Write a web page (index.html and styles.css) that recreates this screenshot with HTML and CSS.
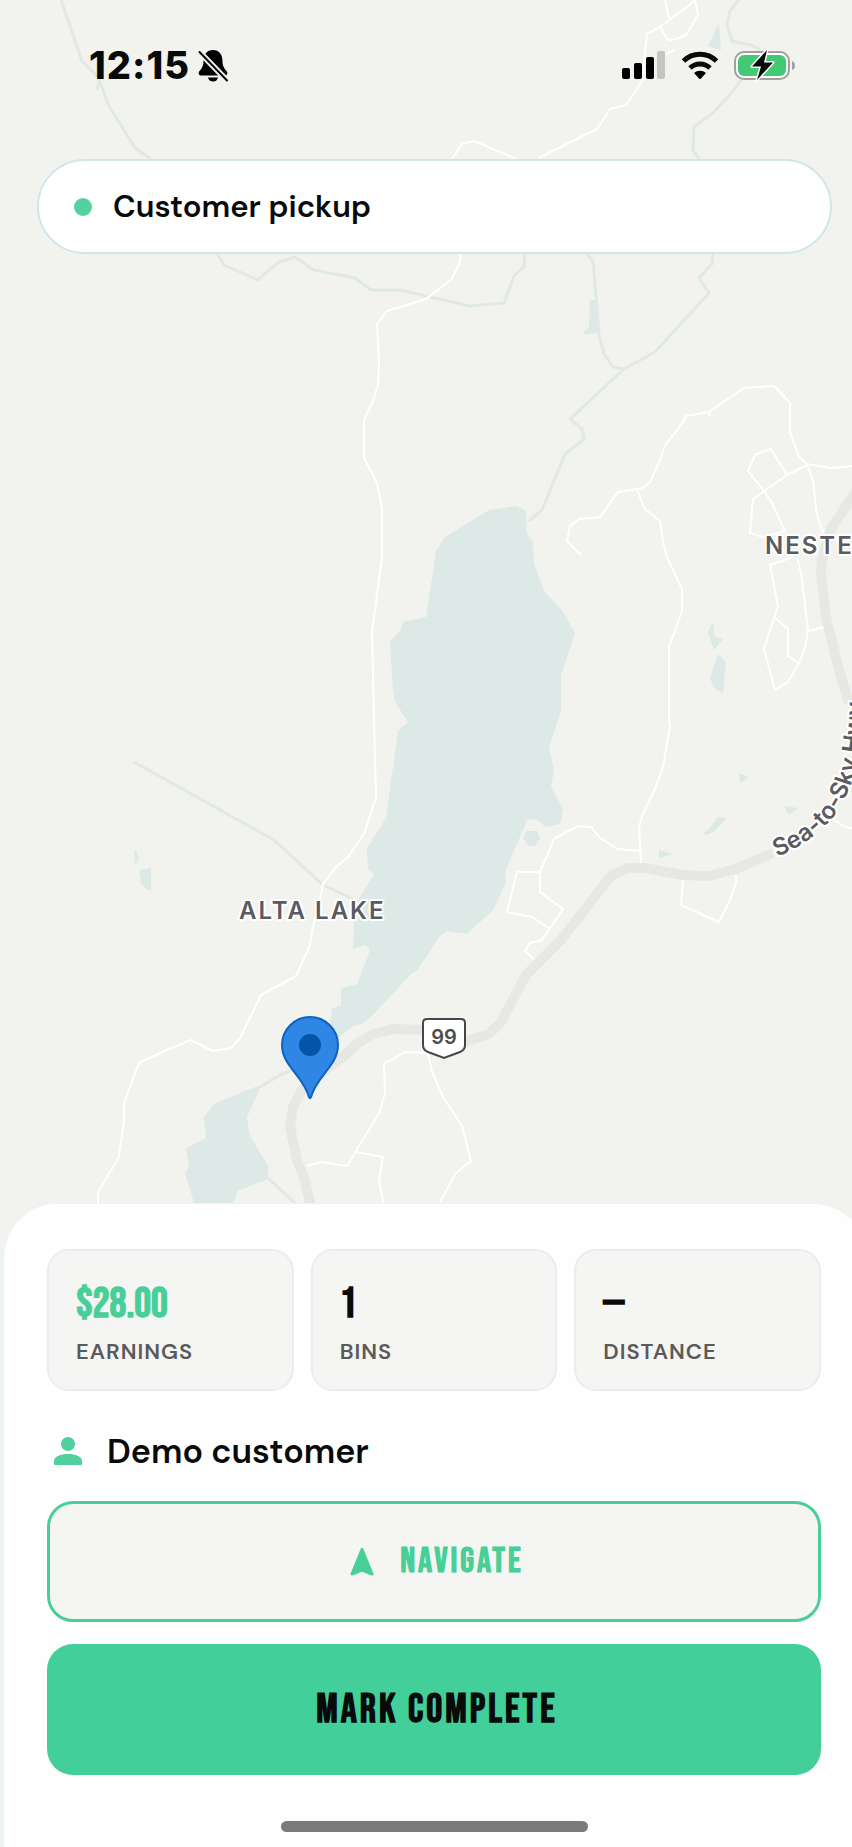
FILE: index.html
```
<!DOCTYPE html>
<html lang="en">
<head>
    <meta charset="UTF-8">
    <meta name="viewport" content="width=device-width, initial-scale=1.0">
    <title>Customer pickup</title>
    <link rel="stylesheet" href="styles.css">
</head>
<body>
    <div class="app">
        <main class="map-area">
            <svg class="map" viewBox="0 0 852 1264" preserveAspectRatio="xMidYMin slice" role="img" aria-label="Map of Alta Lake">
                <!-- Rivers -->
                <g class="river">
                    <path d="M61 0L82 61L98 77L109 106L135 148L151 159M99 82L97 90"/>
                    <path d="M217 253L224 265L258 280L277 263L295 257L314 270L355 278L371 290L400 290L426 296L470 306L504 303L514 276L524 267L525 253"/>
                    <path d="M739 0L730 11L727 25L732 41L751 45L759 49L741 80L734 90L713 113L694 127L693 150L699 159L713 253L712 264L699 278L709 293L655 352L624 369L570 419L582 429L584 439L565 454L542 510L529 521"/>
                    <path d="M586 253L593 261L597 307L599 335L604 354L613 367L624 369"/>
                    <path d="M134 762L274 840L323 885L353 899"/>
                    <path d="M260 1087L280 1075L293 1070M268 1178L298 1206"/>
                </g>
                <!-- Lakes and ponds -->
                <g class="water">
                    <path d="M489 510L516 506L526 511L527 533L533 542L534 563L538 576L545 592L563 612L575 633L561 675L561 711L549 747L554 770L551 786L563 809L560 824L546 827L536 819L527 820L524 828L506 869L505 885L493 910L467 934L447 931L439 937L426 957L417 971L412 973L373 1015L362 1024L353 1026L342 1035L327 1045L332 1008L341 1006L341 988L357 984L369 953L369 947L364 945L353 949L354 923L358 900L374 875L373 873L368 870L367 848L386 818L398 731L408 722L395 702L393 690L390 642L401 629L403 622L426 617L436 551L445 537Z"/>
                    <path d="M267 1083L260 1088L247 1117L249 1134L268 1166L268 1179L238 1191L232 1206H195L185 1173L189 1167L186 1148L206 1138L204 1117L214 1104L247 1090Z"/>
                    <path d="M590 300H595L599 332L585 335L583 332L589 327Z"/>
                    <path d="M719 23L721 50L708 46Z"/>
                    <path d="M134 851H136L139 858L136 864H135ZM139 870L151 868V890H148L141 884Z"/>
                    <path d="M713 622L715 637L723 639L714 650L708 632ZM718 654L726 662L723 693L714 688L710 678Z"/>
                    <path d="M738 773L749 777L741 783ZM784 806L798 808L789 815ZM718 817L727 818L715 831L709 834L702 835L709 829ZM659 850L673 854L659 858Z"/>
                    <path d="M526 831H537L540 838L535 846H529L523 838Z"/>
                </g>
                <!-- Local roads -->
                <g class="road">
                    <path d="M452 159L462 144L474 141L516 159"/>
                    <path d="M539 158L597 129L610 109L626 105L637 89L643 79L645 52L647 34L660 27L696 0M665 0L669 18M660 27L668 40L676 39L686 35L698 15L695 0M674 50L666 54"/>
                    <path d="M461 253L459 265L451 280L426 299L387 311L377 324L379 363L378 385L373 401L364 420V458L377 483L382 508V557L372 632L374 720L376 797L364 834L348 857L336 867L323 884L320 900L313 927L310 945L296 976L261 995L240 1038L231 1048L213 1051L191 1040L169 1049L139 1063L124 1103V1120L119 1157L98 1192V1206"/>
                    <path d="M581 555L567 541L570 526L579 519L600 517L618 492L637 489L644 487L650 482L660 460L665 445L682 424L686 416L709 412L744 388L774 386L790 403V432L799 457L807 464L831 468L852 466M709 412L710 416"/>
                    <path d="M637 489L644 508L660 521L663 541L667 557L682 589V611L669 647V720L670 726L663 767L655 789L642 816L639 828L641 863"/>
                    <path d="M807 465L787 475L771 449L755 455L748 471L764 491L772 503L785 531L763 537L750 533L753 499L787 475M807 465L813 480L816 509L819 523L824 533"/>
                    <path d="M793 557L770 565L778 606L764 649L775 690L788 682L799 663L805 648L808 630L801 573L797 557M774 617L788 629V656L799 664M809 631L824 627"/>
                    <path d="M640 851L617 849L599 837L591 827L578 826L554 839L540 872V892L563 909L542 940L530 943L525 951L534 959M540 872H517L507 912L532 917L549 928"/>
                    <path d="M683 880L681 905L719 922L729 902L736 883V875M834 820L845 827L852 828"/>
                    <path d="M438 1206L456 1173L471 1161L462 1126L443 1097L432 1072L428 1053L405 1052L384 1064L385 1093L379 1113L347 1166L322 1162L306 1166M356 1152L383 1157L379 1181L384 1206"/>
                </g>
                <!-- Highway 99 -->
                <g class="highway">
                    <path d="M312 1210L304 1178L297 1160L290 1127L293 1107L302 1090L328 1068L343 1057L358 1043L373 1034L393 1029L426 1030L460 1043L489 1034L501 1022L526 975L561 940L611 876L628 868H644L683 875L708 876L736 869L773 853"/>
                    <path d="M856 491L831 529L822 560L821 573L826 617L839 670L849 703"/>
                </g>
                <path id="hwy-path" class="label-path" d="M777 857C804 846 824 830 837 812C855 785 863 750 863 690V560"/>
                <text class="map-label"><textPath href="#hwy-path">Sea-to-Sky Hwy</textPath></text>
                <text class="map-label place" x="765" y="554">NESTERS</text>
                <text class="map-label place" x="239" y="919">ALTA LAKE</text>
                <g class="shield">
                    <path d="M427 1019H461Q465 1019 465 1023V1045Q465 1050 460 1052L444 1058L428 1052Q423 1050 423 1045V1023Q423 1019 427 1019Z"/>
                    <text x="444" y="1044" text-anchor="middle">99</text>
                </g>
                <g class="pin">
                    <path d="M310 1017A28 28 0 0 0 282 1045C282 1066 303 1075 309 1097Q310 1099 311 1097C317 1075 338 1066 338 1045A28 28 0 0 0 310 1017Z"/>
                    <circle cx="310" cy="1045" r="11"/>
                </g>
            </svg>

            <div class="status-bar">
                <div class="status-left">
                    <span class="time">12:15</span>
                    <svg class="bell" width="30" height="33" viewBox="0 0 30 33" aria-label="Silent">
                        <path d="M15 1C9 1 5.500 5.500 5.500 12C5.500 17 4 19 1.500 22C0 24 0.500 26.500 3 26.500H27C29.500 26.500 30 24 28.500 22C26 19 24.500 17 24.500 12C24.500 5.500 21 1 15 1Z"/>
                        <path d="M10 28.500H20C19 31.500 17.500 32.500 15 32.500S11 31.500 10 28.500Z"/>
                        <path class="slash-gap" d="M1.500 3L29 31.500"/>
                        <path class="slash" d="M1.500 3L29 31.500"/>
                    </svg>
                </div>
                <div class="status-right">
                    <svg width="44" height="30" viewBox="0 0 44 30" aria-label="Signal">
                        <rect x="0" y="18" width="8" height="11" rx="2"/>
                        <rect x="12" y="13" width="8" height="16" rx="2"/>
                        <rect x="24" y="7" width="8" height="22" rx="2"/>
                        <rect class="dim" x="35" y="1" width="8" height="28" rx="2"/>
                    </svg>
                    <svg width="38" height="30" viewBox="0 0 38 30" aria-label="Wi-Fi">
                        <path class="wave" d="M2.500 11A23.500 23.500 0 0 1 35.500 11"/>
                        <path class="wave" d="M9 18A14.500 14.500 0 0 1 29 18"/>
                        <path d="M13 23A9 9 0 0 1 25 23L20 28.500Q19 29.500 18 28.500Z"/>
                    </svg>
                    <svg width="62" height="34" viewBox="0 0 62 34" aria-label="Battery charging">
                        <rect class="battery-case" x="1" y="4" width="54" height="27" rx="9"/>
                        <rect class="battery-fill" x="4" y="7" width="48" height="21" rx="6"/>
                        <path class="battery-cap" d="M58 13Q61 14 61 17.500T58 22Z"/>
                        <path class="bolt" d="M33 2L18 18.500H27L23 32L39 14.500H30Z"/>
                    </svg>
                </div>
            </div>

            <div class="job-pill">
                <span class="dot"></span>
                <span>Customer pickup</span>
            </div>
        </main>

        <section class="sheet">
            <dl class="stats">
                <div class="stat">
                    <dd class="value green">$28.00</dd>
                    <dt>EARNINGS</dt>
                </div>
                <div class="stat">
                    <dd class="value">1</dd>
                    <dt>BINS</dt>
                </div>
                <div class="stat">
                    <dd class="value">—</dd>
                    <dt>DISTANCE</dt>
                </div>
            </dl>

            <div class="customer">
                <svg width="28" height="28" viewBox="0 0 28 28" aria-hidden="true">
                    <circle cx="14" cy="7" r="7"/>
                    <path d="M1 28Q0 28 0 27V24C0 19.500 7 17 14 17S28 19.500 28 24V27Q28 28 27 28Z"/>
                </svg>
                <span>Demo customer</span>
            </div>

            <button type="button" class="btn btn-navigate">
                <svg width="24" height="28" viewBox="0 0 24 28" aria-hidden="true">
                    <path d="M12 1.500L22 26L12 22L2 26Z"/>
                </svg>
                NAVIGATE
            </button>
            <button type="button" class="btn btn-complete">MARK COMPLETE</button>

            <div class="home-indicator"></div>
        </section>
    </div>
</body>
</html>
```
FILE: styles.css
```
* {
    box-sizing: border-box;
}

body {
    margin: 0;
    background-color: #f2f3ef;
    color: #090b0a;
    font-family: "DM Sans", Inter, "Liberation Sans", sans-serif;
    overflow-x: hidden;
}

.app {
    display: flex;
    flex-direction: column;
    min-height: 100vh;
    overflow: hidden;
}

/* Map */
.map-area {
    position: relative;
    flex: 1;
    min-height: 600px;
}

/* runs on below the rounded corners of the sheet */
.map {
    position: absolute;
    top: 0;
    left: 0;
    width: 100%;
    height: calc(100% + 60px);
    font-family: Inter, "Liberation Sans", sans-serif;
}

.river,
.road,
.highway,
.label-path {
    fill: none;
    stroke-linejoin: round;
}

.river {
    stroke: #e0e9e6;
    stroke-width: 3;
}

.water {
    fill: #dce9e6;
}

.road {
    stroke: #ffffff;
    stroke-width: 2;
}

.highway {
    stroke: #e7e8e4;
    stroke-width: 10;
}

.map-label {
    fill: #5a5b60;
    stroke: #ffffff;
    stroke-width: 4;
    stroke-linejoin: round;
    paint-order: stroke;
    font-size: 24px;
    font-weight: 600;
}

.place {
    letter-spacing: 2px;
}

.shield path {
    fill: #ffffff;
    stroke: #45464a;
    stroke-width: 2;
}

.shield text {
    fill: #4c4d51;
    font-size: 20px;
    font-weight: 600;
}

.pin path {
    fill: #2f86e5;
    stroke: #0d63c0;
    stroke-width: 2;
}

.pin circle {
    fill: #0455a8;
}

/* Status bar */
.status-bar {
    position: relative;
    display: flex;
    justify-content: space-between;
    align-items: center;
    height: 130px;
    padding: 0 56px 0 89px;
}

.status-left,
.status-right {
    display: flex;
    align-items: center;
}

.status-left {
    gap: 8px;
}

.status-right {
    gap: 15px;
}

.time {
    font-family: Inter, "Liberation Sans", sans-serif;
    font-size: 38px;
    font-weight: 800;
    letter-spacing: 1px;
}

.bell {
    overflow: visible;
}

.slash,
.slash-gap {
    fill: none;
    stroke: #090b0a;
    stroke-width: 2;
    stroke-linecap: round;
}

.slash-gap {
    stroke: #f2f3ef;
    stroke-width: 6;
}

.dim {
    fill: #c5c6c3;
}

.wave {
    fill: none;
    stroke: #090b0a;
    stroke-width: 5;
}

.battery-case {
    fill: #ffffff;
    stroke: #a0a19f;
    stroke-width: 2;
}

.battery-fill {
    fill: #43c973;
}

.battery-cap {
    fill: #a0a19f;
}

.bolt {
    fill: #090b0a;
    stroke: #ffffff;
    stroke-width: 3;
    stroke-linejoin: round;
    paint-order: stroke;
}

/* Current job */
.job-pill {
    position: relative;
    display: flex;
    align-items: center;
    gap: 21px;
    height: 95px;
    margin: 29px 20px 0 37px;
    padding: 0 35px;
    border: 2px solid #d1e6e7;
    border-radius: 48px;
    background-color: #ffffff;
    font-size: 31px;
    font-weight: 600;
}

.dot {
    width: 18px;
    height: 18px;
    border-radius: 50%;
    background-color: #54d1a0;
}

/* Bottom sheet */
.sheet {
    position: relative;
    display: flex;
    flex-direction: column;
    margin-right: -16px;
    padding: 45px 47px 15px 43px;
    border-top: 1px solid #eef4f5;
    border-left: 4px solid #eef4f6;
    border-radius: 56px 56px 0 0;
    background-color: #fefefe;
}

.stats {
    display: grid;
    grid-template-columns: repeat(3, 1fr);
    gap: 17px;
    margin: 0;
}

.stat {
    height: 142px;
    padding: 30px 27px 0;
    border: 2px solid #e8eef0;
    border-radius: 22px;
    background-color: #f5f5f3;
}

.stat dt {
    color: #5a5a5a;
    font-size: 22px;
    font-weight: 600;
    letter-spacing: 1px;
    line-height: 30px;
}

.value {
    margin: 0 0 8px;
    font-family: "Bebas Neue", "Liberation Sans Narrow", "Liberation Sans", sans-serif;
    font-size: 42px;
    font-weight: 700;
    line-height: 48px;
}

.green {
    color: #48cf98;
}

.customer {
    display: flex;
    align-items: center;
    gap: 25px;
    height: 40px;
    margin: 40px 0 30px;
    padding-left: 7px;
    font-size: 34px;
    font-weight: 600;
}

.customer svg {
    fill: #4fd09c;
}

.btn {
    display: flex;
    justify-content: center;
    align-items: center;
    padding: 0 0 0 6px;
    border-radius: 26px;
    font-family: "Bebas Neue", "Liberation Sans Narrow", "Liberation Sans", sans-serif;
    font-weight: 700;
    letter-spacing: 3px;
    cursor: pointer;
}

.btn-navigate {
    gap: 26px;
    height: 121px;
    border: 3px solid #48cf98;
    background-color: #f5f5f3;
    color: #48cf98;
    font-size: 35px;
}

.btn-navigate svg {
    fill: #48cf98;
    stroke: #48cf98;
    stroke-width: 3;
    stroke-linejoin: round;
}

.btn-complete {
    height: 131px;
    margin-top: 22px;
    border: none;
    background-color: #43cf99;
    color: #090b0a;
    font-size: 40px;
}

.home-indicator {
    width: 307px;
    height: 11px;
    margin: 46px auto 0;
    border-radius: 6px;
    background-color: #7b7b7b;
}
```
